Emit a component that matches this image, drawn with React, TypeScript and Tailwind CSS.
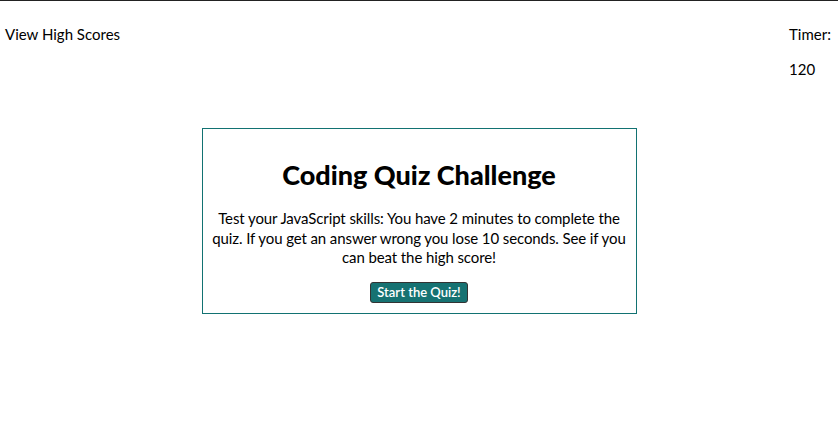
export default function App() {
  return (
    <div className="min-h-[448px] bg-white text-black border-t border-[#222] font-['Lato','Open_Sans',sans-serif]">
      <header className="flex justify-between items-start px-[5px]">
        <a className="mt-[23px] text-[15px] leading-[20px] cursor-pointer">View High Scores</a>
        <div className="mt-[23px] w-[44px] text-[15px] leading-[20px]">
          <p>Timer:</p>
          <p className="mt-[15px]">120</p>
        </div>
      </header>

      <main className="mt-[49px] mx-auto w-[435px] border border-[#127272] px-[5px] pt-[30px] pb-[10px] text-center">
        <h1 className="text-[27px] leading-[32px] font-black">Coding Quiz Challenge</h1>
        <p className="mt-[18px] text-[15px] leading-[19.5px] tracking-[-0.1px]">
          Test your JavaScript skills: You have 2 minutes to complete the quiz. If you get an answer wrong you lose 10 seconds. See if you can beat the high score!
        </p>
        <button className="mt-[14px] px-[6px] h-[21px] rounded-[3px] border border-[#333] bg-[#167272] text-white text-[13px] leading-[18px] font-semibold">
          Start the Quiz!
        </button>
      </main>
    </div>
  );
}
